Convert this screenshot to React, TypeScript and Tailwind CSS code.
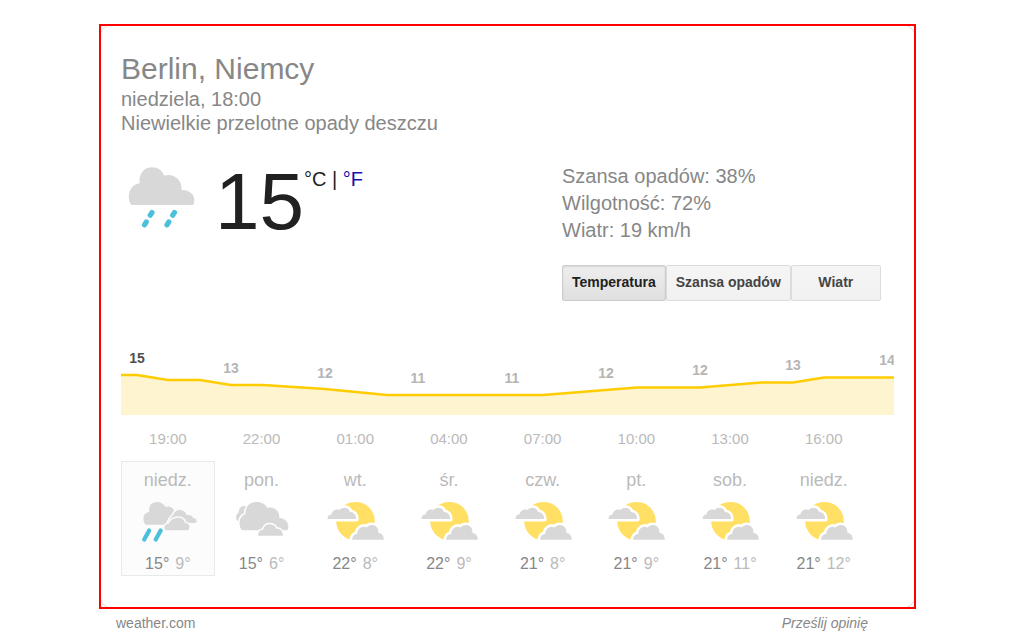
import { useState } from "react";

const temperatureLine =
  "M0 35H16L47 40H79L110 45H142L204 49L266 55H422L516 47.5H579L640 42.5H672L703 37.5H773";

const chartLabels = [
  { x: 16, y: 23, value: 15 },
  { x: 110, y: 33, value: 13 },
  { x: 204, y: 38, value: 12 },
  { x: 297, y: 43, value: 11 },
  { x: 391, y: 43, value: 11 },
  { x: 485, y: 38, value: 12 },
  { x: 579, y: 35, value: 12 },
  { x: 672, y: 30, value: 13 },
  { x: 766, y: 25, value: 14 },
];

const hours = ["19:00", "22:00", "01:00", "04:00", "07:00", "10:00", "13:00", "16:00"];

type Sky = "rain" | "cloudy" | "partly";

const days: { name: string; sky: Sky; high: number; low: number }[] = [
  { name: "niedz.", sky: "rain", high: 15, low: 9 },
  { name: "pon.", sky: "cloudy", high: 15, low: 6 },
  { name: "wt.", sky: "partly", high: 22, low: 8 },
  { name: "śr.", sky: "partly", high: 22, low: 9 },
  { name: "czw.", sky: "partly", high: 21, low: 8 },
  { name: "pt.", sky: "partly", high: 21, low: 9 },
  { name: "sob.", sky: "partly", high: 21, low: 11 },
  { name: "niedz.", sky: "partly", high: 21, low: 12 },
];

const tabs = ["Temperatura", "Szansa opadów", "Wiatr"];

function ShowerIcon() {
  return (
    <svg viewBox="0 0 80 75" className="h-[75px] w-20 shrink-0" aria-hidden="true">
      <path
        fill="#d8d8d8"
        d="M10.500 45C5.500 38.500 7.500 24.500 18.700 23.200C17.500 13 23.500 7.200 31 7.200C37 7.200 41.500 10.500 43 15.500C53 13 61.500 20 60.500 30C67.500 29.500 73.300 34 73.300 40C73.300 42 72.800 43.500 72.300 45Z"
      />
      <g stroke="#4cbfdb" strokeWidth="5.200" strokeLinecap="round">
        <path d="M31 52.600L29.200 55.200M25.300 62L23.500 64.800" />
        <path d="M53.500 52.600L51.700 55.200M47.800 62L46 64.800" />
      </g>
    </svg>
  );
}

function RainIcon() {
  return (
    <svg viewBox="0 0 64 48" className="h-12 w-16" aria-hidden="true">
      <g fill="#d8d8d8" stroke="#fcfcfc" strokeWidth="3" paintOrder="stroke" strokeLinejoin="round">
        <path d="M9.500 28.700C5.500 23.500 7.500 17 13.300 15.800C12.300 9.500 16 6 21 6C25 6 28 8 29.500 11C32 9.800 36.500 10.500 38 14.500L36 28.700Z" />
        <path d="M32 27C33 23 35 20.500 37 19.500C38 16 40.500 14 43.300 14C47 14 50 16 50.700 19C54 18.500 56.500 19.500 57 22C59 22 60.700 23.300 60.700 25C60.700 26.300 60 27 58.500 27Z" />
        <path d="M29.500 34.300C27 31.500 29 28 33 27.500C34 24 38 21.700 42.300 21.700C46 21.700 48.500 24 49 27C52 27 54 29 53.300 32C53 33.500 52.500 34.300 51 34.300Z" />
      </g>
      <path
        d="M13.200 34.500L8.200 43.500M24.700 34.500L19.700 43.500"
        stroke="#4cbfdb"
        strokeWidth="4.200"
        strokeLinecap="round"
      />
    </svg>
  );
}

function CloudyIcon() {
  return (
    <svg viewBox="0 0 64 48" className="h-12 w-16" aria-hidden="true">
      <g fill="#d8d8d8" stroke="#fff" strokeWidth="3" paintOrder="stroke" strokeLinejoin="round">
        <path d="M7.500 25C5 22 6 18 8.800 16.500C8.500 11.500 12 9 17 10.500V20L12 25Z" />
        <path d="M12 34.300C7.500 28.500 9.500 20 15.500 18C15 10.500 20 6 26.500 6C32 6 35.500 8.500 37.500 12C43.500 10 50 14.500 49.300 22C54.500 22 58.800 26 58.300 31.500C58.100 33.500 57.500 34.300 55.500 34.300Z" />
        <path d="M28 39.700C28 36 29.500 34 33 33.700C34 30 36.500 28.300 39.500 28.300C43 28.300 45.500 30.300 46.500 33C50 32 52.800 35 53 39.700Z" />
      </g>
    </svg>
  );
}

function PartlyCloudyIcon() {
  return (
    <svg viewBox="0 0 64 48" className="h-12 w-16" aria-hidden="true">
      <circle cx="32.500" cy="25.200" r="19.300" fill="#ffe064" />
      <g fill="#d8d8d8" stroke="#fff" strokeWidth="5" paintOrder="stroke" strokeLinejoin="round">
        <path d="M4.500 23C4.500 20 6 18.500 8.500 18.500C9 15 12.500 12.500 16.500 14C19 11 25.500 10.500 27 16C31 16 33.200 19 33.200 23Z" />
        <path d="M29 43.700C29.500 40 31.300 38 34.300 38C34 32.500 39.500 29 43.500 31.500C47 27 56 28.500 55.500 37C59 37 60.800 40 60.800 43.700Z" />
      </g>
    </svg>
  );
}

function SkyIcon({ sky }: { sky: Sky }) {
  if (sky === "rain") return <RainIcon />;
  if (sky === "cloudy") return <CloudyIcon />;
  return <PartlyCloudyIcon />;
}

function TemperatureChart() {
  return (
    <svg
      viewBox="0 0 773 75"
      className="block w-full"
      role="img"
      aria-label="Temperatura"
    >
      <path d={`${temperatureLine}V75H0Z`} fill="#fef4cf" />
      <path d={temperatureLine} fill="none" stroke="#ffcc00" strokeWidth="2.500" />
      {chartLabels.map((label, index) => (
        <text
          key={label.x}
          x={label.x}
          y={label.y}
          textAnchor="middle"
          className={
            index === 0
              ? "fill-[#505050] text-[14px] font-bold"
              : "fill-[#b5b5b5] text-[14px] font-bold"
          }
        >
          {label.value}
        </text>
      ))}
    </svg>
  );
}

export default function App() {
  const [activeTab, setActiveTab] = useState(0);
  const [selectedDay, setSelectedDay] = useState(0);

  return (
    <div className="bg-white pt-6 font-['Liberation_Sans',Arial,sans-serif] text-[#878787]">
      <div className="mx-auto w-full max-w-[817px]">
        <main className="relative rounded-[14px] border border-[#dcdcdc] bg-white px-5 pt-[26px] pb-8">
          <div className="pointer-events-none absolute -inset-px border-2 border-[#ff0000]" />

          <div className="px-px">
            <header className="text-[20px] leading-6">
              <h1 className="text-[30px] leading-9">Berlin, Niemcy</h1>
              <p>niedziela, 18:00</p>
              <p>Niewielkie przelotne opady deszczu</p>
            </header>

            <section className="mt-7 flex justify-between">
              <div className="flex items-start text-[#212121]">
                <div className="-mt-[3px]">
                  <ShowerIcon />
                </div>
                <span className="-mt-[3px] ml-[14px] text-[80px] leading-[84px]">15</span>
                <span className="mt-1 text-[20px] leading-6">
                  °C |{" "}
                  <a href="#fahrenheit" className="text-[#1a0dab]">
                    °F
                  </a>
                </span>
              </div>

              <div className="w-[332px]">
                <div className="text-[20px] leading-[27px]">
                  <p>Szansa opadów: 38%</p>
                  <p>Wilgotność: 72%</p>
                  <p>Wiatr: 19 km/h</p>
                </div>
                <div className="mt-[21px] flex">
                  {tabs.map((tab, index) => (
                    <button
                      key={tab}
                      type="button"
                      aria-pressed={index === activeTab}
                      onClick={() => setActiveTab(index)}
                      className={
                        index === activeTab
                          ? "h-9 min-w-[90px] rounded-xs border border-[#cccccc] bg-linear-to-b from-[#eeeeee] to-[#e0e0e0] px-[9px] pb-0.5 text-[14px] leading-4 font-bold text-[#212121] shadow-[inset_0_1px_2px_rgba(0,0,0,0.1)]"
                          : "h-9 min-w-[90px] rounded-xs border border-[#dcdcdc] bg-linear-to-b from-[#f5f5f5] to-[#f1f1f1] px-[9px] pb-0.5 text-[14px] leading-4 font-bold text-[#444444]"
                      }
                    >
                      {tab}
                    </button>
                  ))}
                </div>
              </div>
            </section>

            <section className="mt-[39px]">
              <TemperatureChart />
              <div className="mt-3 grid grid-cols-[repeat(8,4fr)_1fr] text-center text-[15px] leading-6 text-[#bababa]">
                {hours.map((hour) => (
                  <span key={hour}>{hour}</span>
                ))}
              </div>
            </section>

            <section className="mt-[10px] grid grid-cols-[repeat(8,4fr)_1fr]">
              {days.map((day, index) => (
                <button
                  key={index}
                  type="button"
                  aria-pressed={index === selectedDay}
                  onClick={() => setSelectedDay(index)}
                  className={
                    index === selectedDay
                      ? "flex h-[115px] flex-col items-center border border-[#e9e9e9] bg-[#fcfcfc] pt-1.5"
                      : "flex h-[115px] flex-col items-center border border-transparent pt-1.5"
                  }
                >
                  <span className="text-[18px] leading-6 text-[#bababa]">{day.name}</span>
                  <span className="mt-1">
                    <SkyIcon sky={day.sky} />
                  </span>
                  <span className="mt-2 flex gap-1.5 text-[16px] leading-6">
                    <span>{day.high}°</span>
                    <span className="text-[#bababa]">{day.low}°</span>
                  </span>
                </button>
              ))}
            </section>
          </div>
        </main>

        <footer className="mt-1 flex justify-between pr-12 pl-[17px] text-[14px] leading-5">
          <a href="#weather">weather.com</a>
          <a href="#opinia" className="italic">
            Prześlij opinię
          </a>
        </footer>
      </div>
    </div>
  );
}
